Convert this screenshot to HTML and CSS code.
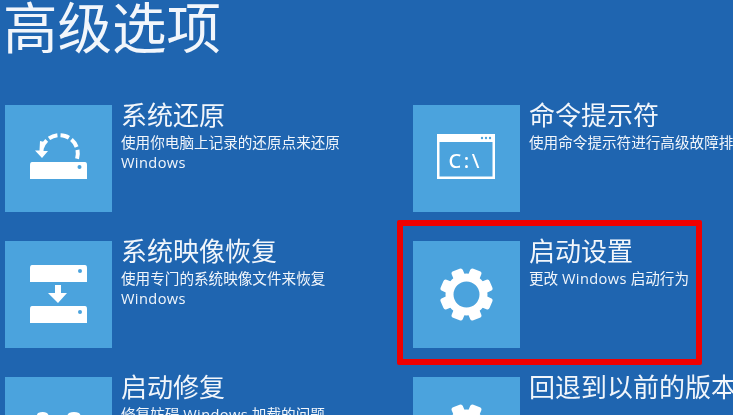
FILE: index.html
```html
<!DOCTYPE html>
<html lang="zh-CN">
<head>
<meta charset="utf-8">
<title>高级选项</title>
<link rel="stylesheet" href="styles.css">
</head>
<body>
<main class="screen">
  <h1 class="heading">高级选项</h1>
  <div class="options">
    <section class="option">
      <div class="tile">
        <svg class="icon" viewBox="0 0 107 107">
          <path class="arc" d="M37 43A18 18 0 0 1 72 54"/>
          <path class="solid" d="M35 36L39.500 37L38.500 46H43L37 53L30 45.500H34.500Z"/>
          <path class="solid" d="M27 57H80Q82 57 82 60V74H25V60Q25 57 27 57Z"/>
          <circle class="hole" cx="74.500" cy="62" r="2"/>
        </svg>
      </div>
      <div class="copy">
        <h2 class="name">系统还原</h2>
        <p class="desc">使用你电脑上记录的还原点来还原 <span class="latin">Windows</span></p>
      </div>
    </section>
    <section class="option">
      <div class="tile">
        <svg class="icon" viewBox="0 0 107 107">
          <path class="solid" d="M27 65H80Q82 65 82 68V82H25V68Q25 65 27 65Z"/>
          <path class="solid" d="M27 24H80Q82 24 82 27V41H25V27Q25 24 27 24Z"/>
          <path class="solid" d="M50 44H56V52H62L53 62L43 52H50Z"/>
          <circle class="hole" cx="75" cy="30" r="2"/>
          <circle class="hole" cx="75" cy="71" r="2"/>
        </svg>
      </div>
      <div class="copy">
        <h2 class="name">系统映像恢复</h2>
        <p class="desc">使用专门的系统映像文件来恢复 <span class="latin">Windows</span></p>
      </div>
    </section>
    <section class="option">
      <div class="tile">
        <svg class="icon" viewBox="0 0 107 107">
          <path class="solid" d="M33 36Q38 34 42 36Q46 40 44 46L40 60H82V84H26V60L32 46Q30 40 33 36Z"/>
          <path class="solid" d="M64 36Q69 34 74 36Q78 40 75 46L70 60H58L62 46Q60 40 64 36Z"/>
        </svg>
      </div>
      <div class="copy">
        <h2 class="name">启动修复</h2>
        <p class="desc">修复妨碍 <span class="latin">Windows</span> 加载的问题</p>
      </div>
    </section>
    <section class="option">
      <div class="tile">
        <svg class="icon" viewBox="0 0 107 107">
          <path class="solid" fill-rule="evenodd" d="M24 29H82V74H24ZM26.500 37V71.500H79.500V37Z"/>
          <circle class="hole" cx="69" cy="33" r="1.200"/>
          <circle class="hole" cx="73" cy="33" r="1.200"/>
          <circle class="hole" cx="77" cy="33" r="1.200"/>
          <text class="prompt" x="35.500" y="63">C:\</text>
        </svg>
      </div>
      <div class="copy">
        <h2 class="name">命令提示符</h2>
        <p class="desc">使用命令提示符进行高级故障排除</p>
      </div>
    </section>
    <section class="option">
      <div class="tile">
        <svg class="icon" viewBox="0 0 107 107">
          <g class="gear">
            <circle cx="53.500" cy="53.500" r="17"/>
            <rect x="47.500" y="27" width="12" height="9" rx="2.500" transform="rotate(22.500 53.500 53.500)"/>
            <rect x="47.500" y="27" width="12" height="9" rx="2.500" transform="rotate(67.500 53.500 53.500)"/>
            <rect x="47.500" y="27" width="12" height="9" rx="2.500" transform="rotate(112.500 53.500 53.500)"/>
            <rect x="47.500" y="27" width="12" height="9" rx="2.500" transform="rotate(157.500 53.500 53.500)"/>
            <rect x="47.500" y="27" width="12" height="9" rx="2.500" transform="rotate(202.500 53.500 53.500)"/>
            <rect x="47.500" y="27" width="12" height="9" rx="2.500" transform="rotate(247.500 53.500 53.500)"/>
            <rect x="47.500" y="27" width="12" height="9" rx="2.500" transform="rotate(292.500 53.500 53.500)"/>
            <rect x="47.500" y="27" width="12" height="9" rx="2.500" transform="rotate(337.500 53.500 53.500)"/>
          </g>
        </svg>
      </div>
      <div class="copy">
        <h2 class="name">启动设置</h2>
        <p class="desc">更改 <span class="latin">Windows</span> 启动行为</p>
      </div>
      <div class="highlight"></div>
    </section>
    <section class="option">
      <div class="tile">
        <svg class="icon" viewBox="0 0 107 107">
          <g class="gear">
            <circle cx="53.500" cy="53.500" r="17"/>
            <rect x="47.500" y="27" width="12" height="9" rx="2.500" transform="rotate(22.500 53.500 53.500)"/>
            <rect x="47.500" y="27" width="12" height="9" rx="2.500" transform="rotate(337.500 53.500 53.500)"/>
          </g>
        </svg>
      </div>
      <div class="copy">
        <h2 class="name">回退到以前的版本</h2>
      </div>
    </section>
  </div>
</main>
</body>
</html>
```
FILE: styles.css
```css
html, body {
  margin: 0;
  height: 100%;
  overflow: hidden;
  background: #1f65b0;
}

.screen {
  width: 733px;
  height: 415px;
  overflow: hidden;
  padding-left: 5px;
  box-sizing: border-box;
  color: #f2f6fb;
  font-family: "Noto Sans CJK SC", "Noto Sans", sans-serif;
  filter: blur(0.4px);
}

.heading {
  margin: -3px 0 0 -2px;
  height: 108px;
  font-size: 54.500px;
  line-height: 56px;
  font-weight: 400;
}

.options {
  display: grid;
  grid-template-rows: repeat(3, 107px);
  grid-auto-flow: column;
  grid-template-columns: 408px 408px;
  row-gap: 29px;
}

.option {
  position: relative;
  display: flex;
  gap: 9px;
  align-items: flex-start;
}

.tile {
  flex: none;
  width: 107px;
  height: 107px;
  background: #4ba3dd;
}

.icon {
  display: block;
  width: 107px;
  height: 107px;
}

.solid {
  fill: #fff;
}

.hole {
  fill: #4ba3dd;
}

.arc {
  fill: none;
  stroke: #fff;
  stroke-width: 4;
  stroke-dasharray: 9 3;
}

.gear {
  fill: #fff;
}

.gear circle {
  fill: none;
  stroke: #fff;
  stroke-width: 8;
}

.prompt {
  fill: #fff;
  font-family: "Noto Sans", sans-serif;
  font-size: 20px;
  font-weight: 500;
  letter-spacing: 2.500px;
}

.copy {
  width: 240px;
  flex: none;
  margin-top: -8px;
}

.name {
  margin: 0;
  font-size: 26px;
  line-height: 34px;
  font-weight: 400;
  white-space: nowrap;
}

.desc {
  margin: 1px 0 0;
  font-family: "Open Sans", "Noto Sans CJK SC", sans-serif;
  font-size: 14.600px;
  line-height: 20px;
  width: 232px;
}

.latin {
  letter-spacing: 0.400px;
}

.highlight {
  position: absolute;
  left: -16px;
  top: -21px;
  width: 305px;
  height: 145px;
  box-sizing: border-box;
  border: 6px solid #f00000;
  border-radius: 2px;
}
```
